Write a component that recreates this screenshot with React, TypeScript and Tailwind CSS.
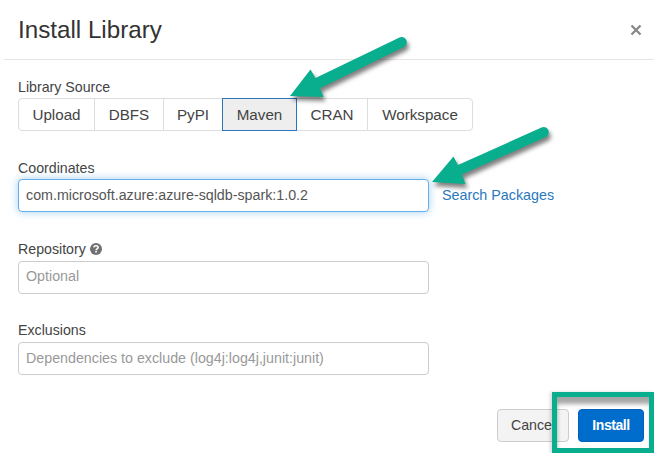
import type { ReactNode } from "react";

const sources = [
  { label: "Upload", width: "w-[77px]" },
  { label: "DBFS", width: "w-[70px]" },
  { label: "PyPI", width: "w-[60px]" },
  { label: "Maven", width: "w-[75px]" },
  { label: "CRAN", width: "w-[72px]" },
  { label: "Workspace", width: "w-[106px]" },
];

function SourceTabs() {
  return (
    <div className="flex h-[33px]">
      {sources.map(({ label, width }) => (
        <button
          key={label}
          className={`${width} -mr-px border pt-px text-[15.2px] first:rounded-l-[4px] last:rounded-r-[4px] ${
            label === "Maven"
              ? "z-10 border-[#2b76bd] bg-[#eeeeee]"
              : "border-[#dddddd] bg-white"
          }`}
        >
          {label}
        </button>
      ))}
    </div>
  );
}

function Field({ label, children }: { label: ReactNode; children: ReactNode }) {
  return (
    <div className="h-[81px]">
      <div className="flex h-5 items-center gap-1 py-px text-[14.2px] leading-[18px]">{label}</div>
      {children}
    </div>
  );
}

const inputStyle =
  "block h-[33px] w-[411px] rounded-[4px] border bg-white px-[7px] text-[14.25px] outline-none placeholder:text-[#999999] placeholder:opacity-100";

function HelpIcon() {
  return (
    <svg width="12" height="12" viewBox="0 0 12 12">
      <circle cx="6" cy="6" r="6" fill="#707070" />
      <path d="M3.8 4.4C4 3.2 4.9 2.7 6 2.7c1.3 0 2.1.7 2.1 1.7 0 1.4-2 1.4-2 2.8" fill="none" stroke="white" strokeWidth="1.6" />
      <path d="M5.2 8h1.7v1.6H5.2z" fill="white" />
    </svg>
  );
}

function Arrow({ className, d }: { className: string; d: string }) {
  return (
    <svg
      width="140"
      height="90"
      viewBox="0 0 140 90"
      className={`pointer-events-none absolute z-20 drop-shadow-[2px_4px_2px_rgba(0,0,0,0.5)] ${className}`}
    >
      <path d={d} fill="#08ae8e" />
    </svg>
  );
}

export default function App() {
  return (
    <div className="relative h-[453px] w-[654px] overflow-hidden bg-white font-['Liberation_Sans',Arial,sans-serif] text-[#444444]">
      <header className="ml-1 flex h-[60px] items-center justify-between border-b border-[#e5e5e5] pr-[12px] pl-[14px]">
        <h1 className="pt-px text-[24.2px] leading-8 text-[#333333]">Install Library</h1>
        <button aria-label="Close" className="mt-px flex size-3 items-center justify-center">
          <svg width="12" height="12" viewBox="0 0 12 12">
            <path d="m1.5 1.5 9 9m0-9-9 9" stroke="#888888" strokeWidth="2.3" />
          </svg>
        </button>
      </header>

      <main className="pt-[18px] pl-[18px]">
        <div className="mb-[27px]">
          <div className="h-5 text-[14.2px] leading-[18px]">Library Source</div>
          <SourceTabs />
        </div>
        <Field label="Coordinates">
          <div className="mt-px flex items-center gap-[13px]">
            <input
              className={`${inputStyle} border-[#66afe9] pb-[2px] text-[#555555] shadow-[0_0_8px_rgba(102,175,233,0.6)]`}
              defaultValue="com.microsoft.azure:azure-sqldb-spark:1.0.2"
            />
            <a className="text-[14.3px] text-[#2878bd]">Search Packages</a>
          </div>
        </Field>
        <Field label={<>Repository <HelpIcon /></>}>
          <input className={`${inputStyle} mt-[2px] border-[#cccccc] pb-[4px]`} placeholder="Optional" />
        </Field>
        <Field label="Exclusions">
          <input
            className={`${inputStyle} mt-[2px] border-[#cccccc] pb-[2px]`}
            placeholder="Dependencies to exclude (log4j:log4j,junit:junit)"
          />
        </Field>
      </main>

      <footer className="mt-[8px] flex justify-end gap-[9px] pr-[10px]">
        <button className="h-[33px] w-[72px] rounded-[4px] border border-[#cccccc] bg-[#f3f3f3] pt-px text-[14.2px]">
          Cancel
        </button>
        <button className="h-[33px] w-[66px] rounded-[4px] border border-[#0061bd] bg-[#006dcc] pb-px text-[14px] font-bold tracking-[-0.45px] text-white">
          Install
        </button>
      </footer>

      <Arrow
        className="top-[25px] left-[280px]"
        d="M10 71 30.5 44.5 35.5 53 119.5 12.5a5.2 5.2 0 0 1 4.8 9.2L40 63.2 43.5 72Z"
      />
      <Arrow
        className="top-[115px] left-[422px]"
        d="M10 67 31.5 41.5 36 50 119.5 12.5a5.2 5.2 0 0 1 4.8 9.2L40 59.5 43.5 69Z"
      />
      <div className="absolute top-[392px] left-[552px] h-[61px] w-[102px] overflow-hidden border-[5px] border-[#08ae8e] shadow-[-2px_0_3px_rgba(0,0,0,0.15)]">
        <div className="absolute -inset-[5px] border-[5px] border-transparent shadow-[inset_1px_8px_4px_-1px_rgba(0,0,0,0.35)]" />
      </div>
    </div>
  );
}
